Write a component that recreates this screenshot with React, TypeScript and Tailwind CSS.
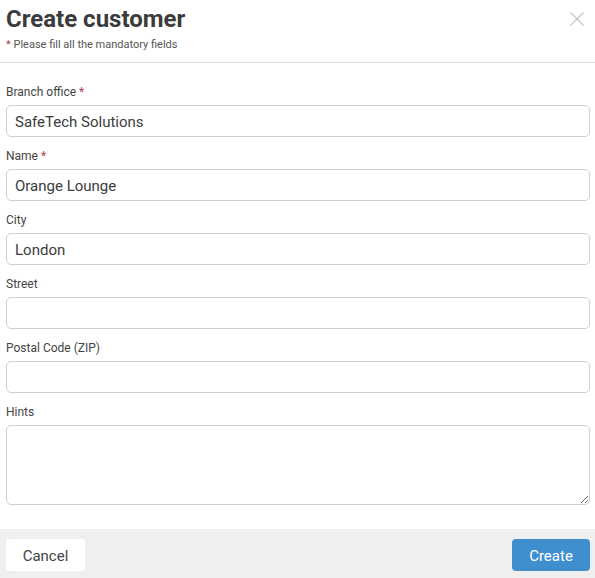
import React from "react";

const Field = ({ label, required, value, multiline }: { label: string; required?: boolean; value?: string; multiline?: boolean }) => (
  <div className="flex flex-col">
    <label className="text-[12px] leading-[16px] text-[#444] mb-[5px]">
      {label}
      {required && <span className="text-[#b5404a]"> *</span>}
    </label>
    {multiline ? (
      <textarea
        defaultValue={value}
        className="h-[80px] w-full rounded-[5px] border border-[#cfcfcf] bg-white px-[8px] py-[6px] text-[15px] text-[#3c3c3c] outline-none"
      />
    ) : (
      <input
        defaultValue={value}
        className="h-[32px] w-full rounded-[5px] border border-[#cfcfcf] bg-white px-[8px] pt-[1px] text-[15px] text-[#3c3c3c] outline-none"
      />
    )}
  </div>
);

export default function App() {
  return (
    <div
      className="w-[595px] h-[578px] bg-white flex flex-col overflow-hidden"
      style={{ fontFamily: "Roboto, 'Liberation Sans', sans-serif" }}
    >
      <div className="relative px-[6px] pt-[5px] pb-[10px] border-b border-[#dcdcdc]">
        <h1 className="text-[24px] leading-[28px] font-bold text-[#3b3b3b]">Create customer</h1>
        <p className="mt-[5px] text-[11px] leading-[14px] text-[#555]">
          <span className="text-[#b5404a]">*</span> Please fill all the mandatory fields
        </p>
        <button className="absolute right-[10px] top-[11px] w-[16px] h-[16px]">
          <svg width="16" height="16" viewBox="0 0 16 16" fill="none" stroke="#c4c4c4" strokeWidth="1.2">
            <path d="M1.5 1.5 L14.5 14.5 M14.5 1.5 L1.5 14.5" />
          </svg>
        </button>
      </div>
      <div className="flex flex-col gap-[11px] px-[6px] pt-[21px] pr-[5px]">
        <Field label="Branch office" required value="SafeTech Solutions" />
        <Field label="Name" required value="Orange Lounge" />
        <Field label="City" value="London" />
        <Field label="Street" />
        <Field label="Postal Code (ZIP)" />
        <Field label="Hints" multiline />
      </div>
      <div className="mt-auto h-[49px] bg-[#efefef] flex items-start justify-between px-[6px] pr-[5px] pt-[10px]">
        <button className="h-[32px] w-[79px] rounded-[3px] bg-white pt-[2px] text-[15px] text-[#444]">Cancel</button>
        <button className="h-[32px] w-[78px] rounded-[4px] bg-[#3f8fcf] pt-[2px] text-[15px] text-white">Create</button>
      </div>
    </div>
  );
}
